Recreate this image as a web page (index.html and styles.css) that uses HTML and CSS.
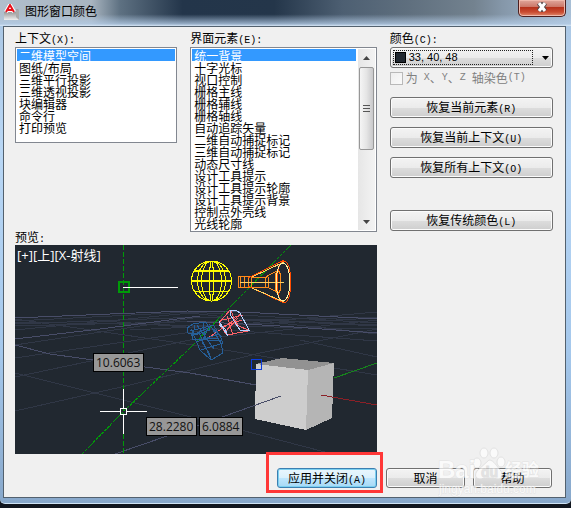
FILE: index.html
```html
<!DOCTYPE html>
<html lang="zh-CN">
<head>
<meta charset="utf-8">
<title>图形窗口颜色</title>
<link rel="stylesheet" href="styles.css">
</head>
<body>
<div class="window">
  <header class="titlebar">
    <svg class="app-icon" viewBox="0 0 16 17" aria-hidden="true">
      <defs><linearGradient id="chip" x1="0" y1="0" x2="0" y2="1"><stop offset="0" stop-color="#777"/><stop offset="1" stop-color="#eee"/></linearGradient></defs>
      <path d="M0 8H12V5L15 6V16H0Z" fill="url(#chip)"/>
      <path d="M12 5L15 6V16L12 13Z" fill="#aaa"/>
      <path d="M2 8L6 1L10 8M4 6H8" fill="none" stroke="#fff" stroke-width="4"/>
      <path d="M2 8L6 1L10 8M4 6H8" fill="none" stroke="#e8101a" stroke-width="2"/>
    </svg>
    <h1 class="title">图形窗口颜色</h1>
    <button class="close" type="button" aria-label="关闭">
      <svg viewBox="0 0 12 10" aria-hidden="true"><path d="M3 1L9 9M9 1L3 9" stroke="#4d4548" stroke-width="5"/><path d="M3 1L9 9M9 1L3 9" stroke="#fff" stroke-width="3"/></svg>
    </button>
  </header>
  <main class="client">
    <div class="columns">
      <section class="field">
        <label for="context">上下文<span class="key">(X):</span></label>
        <select id="context" class="list list-short" size="7">
          <option selected>二维模型空间</option>
          <option>图纸/布局</option>
          <option>三维平行投影</option>
          <option>三维透视投影</option>
          <option>块编辑器</option>
          <option>命令行</option>
          <option>打印预览</option>
        </select>
      </section>
      <section class="field">
        <label for="element">界面元素<span class="key">(E):</span></label>
        <div class="list-frame">
          <select id="element" class="list list-tall" size="15">
            <option selected>统一背景</option>
            <option>十字光标</option>
            <option>视口控制</option>
            <option>栅格主线</option>
            <option>栅格辅线</option>
            <option>栅格轴线</option>
            <option>自动追踪矢量</option>
            <option>二维自动捕捉标记</option>
            <option>三维自动捕捉标记</option>
            <option>动态尺寸线</option>
            <option>设计工具提示</option>
            <option>设计工具提示轮廓</option>
            <option>设计工具提示背景</option>
            <option>控制点外壳线</option>
            <option>光线轮廓</option>
          </select>
          <div class="scroll" aria-hidden="true">
            <svg class="arrow" viewBox="0 0 7 4"><path d="M0 4L3.5 0L7 4Z" fill="#444"/></svg>
            <div class="thumb"><i></i><i></i><i></i></div>
            <svg class="arrow arrow-down" viewBox="0 0 7 4"><path d="M0 0L3.5 4L7 0Z" fill="#444"/></svg>
          </div>
        </div>
      </section>
      <section class="field">
        <label for="color">颜色<span class="key">(C):</span></label>
        <div class="combo">
          <select id="color"><option>33, 40, 48</option></select>
          <span class="swatch"></span>
          <svg class="combo-arrow" viewBox="0 0 7 4" aria-hidden="true"><path d="M0 0L3.5 4L7 0Z"/></svg>
        </div>
        <label class="tint"><input type="checkbox" disabled>为<span class="key"> X</span>、<span class="key">Y</span>、<span class="key">Z </span>轴染色<span class="key">(T)</span></label>
        <div class="actions">
          <button class="btn" type="button">恢复当前元素<span class="key">(R)</span></button>
          <button class="btn" type="button">恢复当前上下文<span class="key">(U)</span></button>
          <button class="btn" type="button">恢复所有上下文<span class="key">(O)</span></button>
          <button class="btn classic" type="button">恢复传统颜色<span class="key">(L)</span></button>
        </div>
      </section>
    </div>
    <div class="preview-row">
      <section class="field">
        <h2 class="caption">预览<span class="key">:</span></h2>
        <svg class="preview" viewBox="15 245 362 209" role="img" aria-label="预览">
          <rect x="15" y="245" width="362" height="209" fill="#212830"/>
          <g fill="none" stroke="#303746" shape-rendering="crispEdges">
            <path d="M15 321L190 312L377 323M15 324L200 317L377 326M15 330L190 313L377 334M15 326L377 317M15 322L377 329M15 345L200 317L377 325M15 358L260 322L377 312M15 377L190 340L377 320M15 411L130 385L260 353L377 329M15 373L95 393L195 418L325 452M90 320L377 341M15 319L200 346L377 375M130 330L377 318M300 340L377 357"/>
            <path stroke="#484d68" d="M15 318L110 314L187 311L240 312L377 319M15 339L100 329L200 316M15 345L50 354L115 363L190 373L256 385M187 321L280 326L377 333M115 454L167 436L225 416"/>
          </g>
          <g fill="none" stroke="#009a08" shape-rendering="crispEdges">
            <path d="M123.5 245V454" stroke-dasharray="5 2"/>
            <path d="M82 454L123 412L188 350L233 304L291 245" stroke-dasharray="3 1"/>
            <rect x="119" y="282" width="10" height="10" stroke-width="2"/>
          </g>
          <path d="M123 287.500H178" stroke="#fff" shape-rendering="crispEdges"/>
          <g fill="none" stroke="#ff0" shape-rendering="crispEdges">
            <circle cx="211.500" cy="281" r="20"/>
            <ellipse cx="211.500" cy="281" rx="14" ry="20"/>
            <ellipse cx="211.500" cy="281" rx="10" ry="20"/>
            <ellipse cx="211.500" cy="281" rx="2" ry="20"/>
            <path d="M194 270.500H229M194 271.500H229M192 280.500H232M192 281.500H232M195 291.500H228"/>
          </g>
          <g fill="none" shape-rendering="crispEdges">
            <path stroke="#ff8c1a" d="M238 276H251V287H238ZM251 277H267M251 287H267M240 276V288M244 276V288M248 276V288M267 276L279 270M267 287L279 293"/>
            <path stroke="#ff4b00" d="M248 278L284 260M248 286L284 303"/>
            <ellipse cx="284" cy="282" rx="7" ry="21" stroke="#ff4b00"/>
            <ellipse cx="267" cy="282" rx="2" ry="6" stroke="#ff8c1a"/>
            <ellipse cx="278" cy="282" rx="3" ry="11" stroke="#ff8c1a"/>
            <path stroke="#ffd060" d="M240 282.500H284M252 277L284 262M252 288L284 302"/>
            <ellipse cx="283" cy="282" rx="7" ry="19" stroke="#fff3a0"/>
            <path stroke="#ff6268" d="M230 310L219 323L227 335L248 331M231 316L239 326L248 330M227 316L233 335M223 320L243 315M221 327L242 320M224 333L238 318M208 338L233 321L240 314M231 310L236 325"/>
            <path stroke="#b5d2ff" d="M230 310H236L240 313L249 330L240 330L231 316L230 310M219 321L227 335M219 325L225 329L228 336"/>
            <path stroke="#265f99" d="M187 328L193 324L206 322L210 330L195 335L188 333ZM190 331L210 326L222 337M191 329L200 350L211 360L223 353L221 343L210 325L214 326L220 336L223 343L201 350M191 336L210 327M197 325L214 349M203 323L205 339L219 338M188 334L199 333L211 359M195 325L192 339L222 341M208 328L202 342L209 353L211 360M196 342L219 334"/>
          </g>
          <g shape-rendering="crispEdges">
            <path fill="#929292" d="M256 364L282 358L334 363L308 370Z"/>
            <path fill="#cdcdcd" d="M256 364L308 370L306 430L255 419Z"/>
            <path fill="#b5b5b5" d="M308 370L334 363L332 418L306 430Z"/>
            <rect x="251.500" y="359.500" width="10" height="10" fill="none" stroke="#0b3ce0"/>
            <path fill="none" stroke="#484d68" d="M225 416L281 396"/>
            <path stroke="#8b2027" d="M321 395L377 405"/>
            <path stroke="#16851c" d="M334 378L377 363"/>
          </g>
          <g fill="none" stroke="#fff" shape-rendering="crispEdges">
            <path d="M100 411.500H120M127 411.500H147M123.500 389V408M123.500 415V434"/>
            <rect x="120.500" y="408.500" width="6" height="6"/>
          </g>
          <g class="tips">
            <rect x="93.500" y="353.500" width="50" height="18"/>
            <rect x="146.500" y="417.500" width="50" height="18"/>
            <rect x="199.500" y="417.500" width="43" height="18"/>
            <text x="96" y="367">10.6063</text>
            <text x="149" y="431">28.2280</text>
            <text x="202" y="431">6.0884</text>
          </g>
          <text class="view-label" x="17" y="260">[+][上][X-射线]</text>
        </svg>
      </section>
    </div>
    <footer class="footer">
      <div class="highlight"><button class="btn apply" type="button">应用并关闭<span class="key">(A)</span></button></div>
      <button class="btn" type="button">取消</button>
      <button class="btn" type="button">帮助</button>
      <svg class="watermark" viewBox="0 0 104 60" aria-hidden="true">
        <g fill="#fff" stroke="#ddd">
          <ellipse cx="39" cy="18" rx="4" ry="5"/><ellipse cx="46" cy="8" rx="4" ry="5"/><ellipse cx="56" cy="8" rx="4" ry="5"/><ellipse cx="63" cy="17" rx="4" ry="5"/>
          <path d="M51 15C56 15 59 22 63 26C67 32 62 36 56 33H46C40 36 35 32 39 26Z"/>
        </g>
        <text class="mark-name" x="0" y="33">Bai</text>
        <text class="mark-du" x="43" y="32">du</text>
        <text class="mark-cjk" x="67" y="31">经验</text>
        <text class="mark-url" x="1" y="48">jingyan.baidu.com</text>
      </svg>
    </footer>
  </main>
</div>
</body>
</html>
```
FILE: styles.css
```css
* { box-sizing: border-box; }

body {
  margin: 0;
  min-height: 100vh;
  background: #11161f;
  color: #000;
  font: 12px/12px "Noto Sans CJK SC", sans-serif;
}

button, select, input { font: inherit; color: inherit; margin: 0; }

.window {
  padding: 0 5px 5px 3px;
  border-bottom: 1px solid #cfe3f5;
  border-radius: 0 0 5px 5px;
  background: linear-gradient(#a9c5e2, #b9d7f5 30%, #a5c8ec 70%, #88a8cb);
}

.titlebar {
  display: flex;
  height: 26px;
  margin: 0 -5px 0 -3px;
  padding: 0 5px 0 4px;
  background:
    linear-gradient(transparent 55%, #b3cbe5cc 92%, #d6e6f6),
    linear-gradient(90deg, #b0bfcc, #a9b5c0 16%, #5e7182 21%, #23354a 32%, #24364a 48%, #4d5f72 60%, #60707f 72%, #73828f 83%, #8597a9 88%, #a8bfd6);
}

.app-icon { width: 16px; height: 17px; margin-top: 4px; }

.title {
  flex: 1;
  margin: 2px 0 0 5px;
  font-size: 12px;
  font-weight: 400;
  line-height: 17px;
}

.close {
  width: 48px;
  height: 17px;
  padding: 0;
  border: 1px solid #4d2020;
  border-top: 0;
  border-radius: 0 0 5px 5px;
  background: linear-gradient(#e0a79b, #cc7869 42%, #b5301a 45%, #c94b30 75%, #e18a6d);
  box-shadow: inset 0 0 0 1px #efb9ac;
}

.close svg { display: block; width: 12px; height: 10px; margin: 0 auto 3px; }

.client {
  padding: 5px 12px 4px 11px;
  border: 1px solid #53616e;
  background: #f0f0f0;
}

.columns {
  display: grid;
  grid-template-columns: 162fr 186fr 163fr;
  gap: 13px;
}

.field { display: flex; flex-direction: column; min-width: 0; }
.field > label:first-child { height: 15px; line-height: 11px; }

.key { font-family: "Liberation Mono", monospace; font-size: 10px; white-space: pre; }

.list {
  appearance: none;
  display: block;
  width: 100%;
  padding: 1px;
  overflow: hidden;
  border: 1px solid #828790;
  border-radius: 0;
  outline: 0;
  background: #fff;
}

.list option {
  display: flex;
  align-items: center;
  min-height: 12px;
  height: 12px;
  padding: 0 2px;
  color: #000;
}

.list option:checked {
  color: #fff;
  background: #3399ff linear-gradient(#3399ff, #3399ff);
}

.list-short { height: 96px; }
.list-frame { display: flex; height: 185px; border: 1px solid #828790; background: #fff; }
.list-tall { flex: 1; min-width: 0; height: 183px; border: 0; }

.scroll {
  display: flex;
  flex-direction: column;
  align-items: center;
  width: 17px;
  margin: 1px;
  background: linear-gradient(90deg, #e6e6e6, #f3f3f3);
}

.arrow { width: 7px; height: 4px; margin: 7px 0; }
.arrow-down { margin: auto 0 6px; }

.thumb {
  display: flex;
  flex-direction: column;
  align-items: center;
  justify-content: center;
  gap: 2px;
  width: 15px;
  height: 83px;
  border: 1px solid #979797;
  border-radius: 2px;
  background: linear-gradient(90deg, #f5f5f5, #e5e5e5 50%, #c9c9cb);
}

.thumb i { width: 7px; height: 1px; background: #555; }

.combo, .btn {
  border: 1px solid #707070;
  border-radius: 3px;
  background: linear-gradient(#f3f3f3, #ebebeb 50%, #dddddd 51%, #cecece);
  box-shadow: inset 0 0 0 1px #fbfbfb;
}

.combo { position: relative; height: 21px; padding: 2px; }

.combo select {
  appearance: none;
  display: block;
  width: calc(100% - 17px);
  height: 15px;
  padding: 0 0 0 15px;
  border: 1px dotted #222;
  border-radius: 0;
  background: transparent;
  font: 11px/13px "Liberation Sans", sans-serif;
}

.swatch {
  position: absolute;
  left: 4px;
  top: 4px;
  width: 11px;
  height: 11px;
  border: 1px solid #000;
  background: #212830;
  pointer-events: none;
}

.combo-arrow { position: absolute; right: 3px; top: 8px; width: 7px; height: 4px; }

.tint { display: flex; align-items: center; height: 20px; color: #808080; }

.tint input {
  appearance: none;
  width: 13px;
  height: 13px;
  margin-right: 3px;
  border: 1px solid #b9b9b9;
  background: linear-gradient(135deg, #eee, #fafafa);
}

.actions { display: flex; flex-direction: column; gap: 9px; margin-top: 9px; }
.btn { height: 21px; padding: 0 6px; text-align: center; line-height: 17px; white-space: nowrap; }
.classic { margin-top: 23px; }

.preview-row {
  display: grid;
  grid-template-columns: 362fr 176fr;
}

.caption { margin: 0; height: 13px; font-size: 12px; font-weight: 400; line-height: 9px; }
.preview { display: block; width: 100%; height: auto; }

.tips rect { fill: #979797; stroke: #000; }
.tips text { font: 12px "Open Sans", sans-serif; fill: #111; }
.view-label { font: 13px "Open Sans", "Noto Sans CJK SC", sans-serif; fill: #fff; }

.footer {
  position: relative;
  display: flex;
  align-items: center;
  justify-content: flex-end;
  gap: 8px;
  margin-top: -2px;
  padding-right: 1px;
}

.footer .btn { width: 79px; }
.highlight { display: flex; margin-right: -5px; padding: 13px 3px 2px 8px; border: 3px solid #ff3737; }

.footer .apply {
  width: 100px;
  height: 20px;
  border-color: #3c7fb1;
  background: linear-gradient(#eaf6fd, #d9f0fc 50%, #bee6fd 51%, #a7d9f5);
  box-shadow: inset 0 0 0 1px #7bd0f0;
}

.footer > .btn { height: 20px; margin-top: 10px; }

.watermark {
  position: absolute;
  right: 11px;
  bottom: -12px;
  width: 104px;
  height: 60px;
  opacity: 0.7;
  pointer-events: none;
}

.watermark text { fill: #fff; stroke: #ddd; stroke-width: 1px; paint-order: stroke; }
.mark-name { font: bold 24px "Liberation Sans", sans-serif; }
.watermark .mark-du { font: bold 14px "Liberation Sans", sans-serif; fill: #ddd; }
.mark-cjk { font: bold 17px "Noto Sans CJK SC", sans-serif; }
.mark-url { font: 12px "Liberation Sans", sans-serif; }
```
